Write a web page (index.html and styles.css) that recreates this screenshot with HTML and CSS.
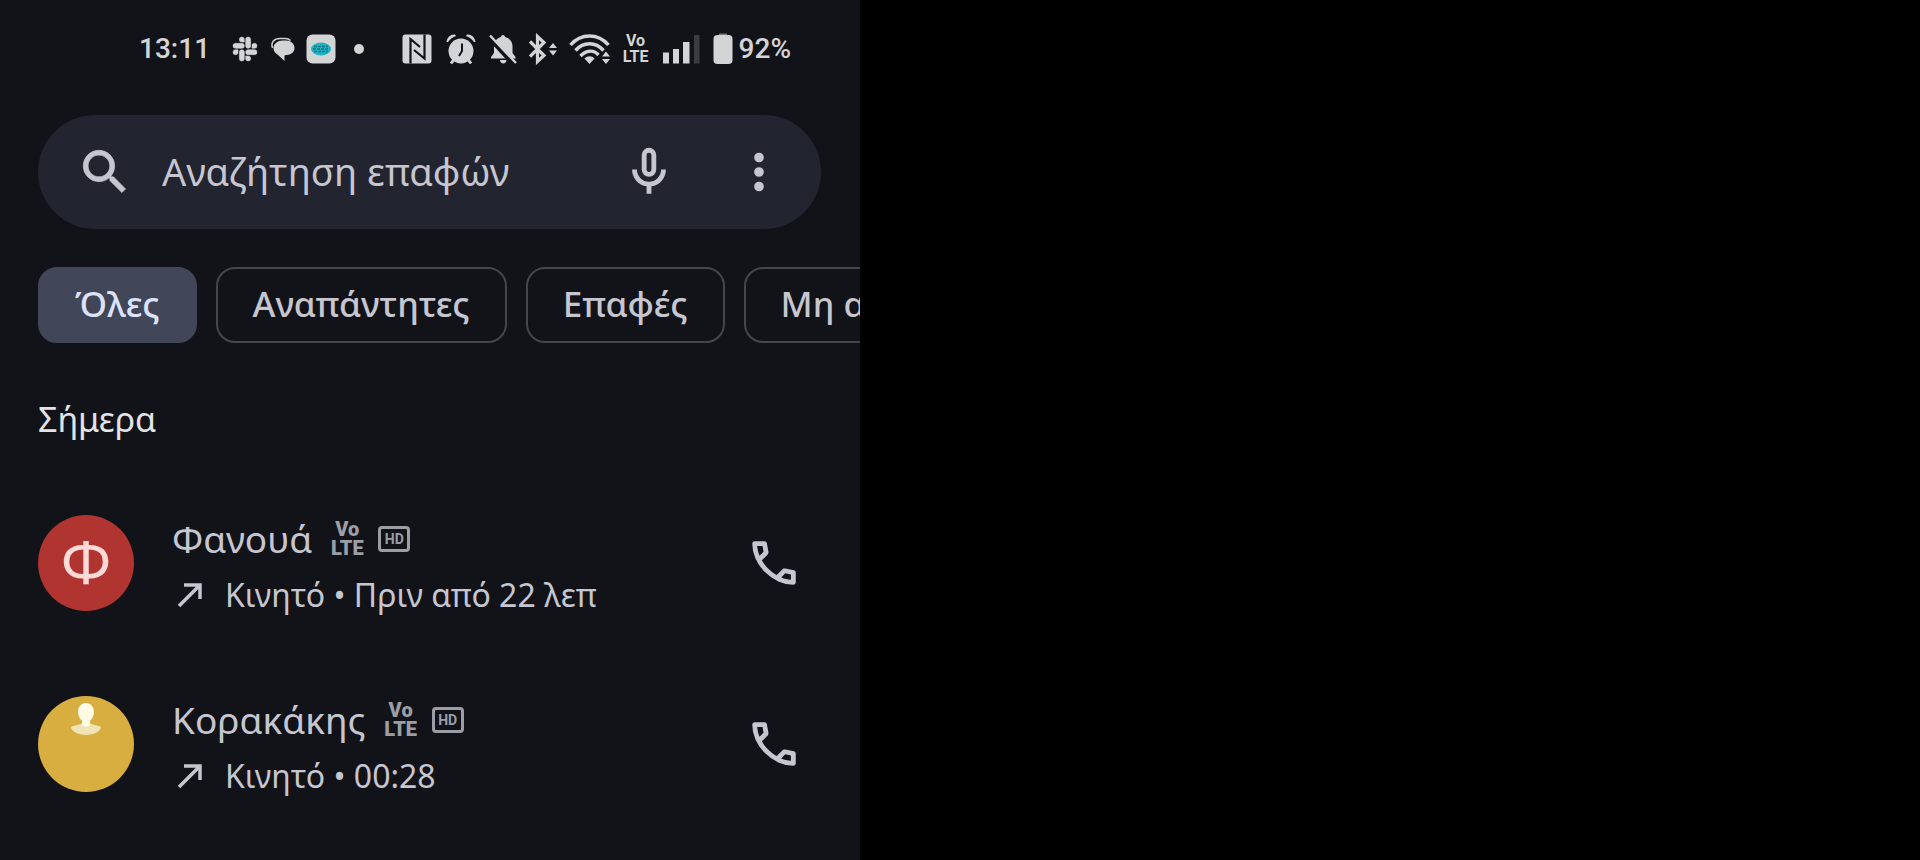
FILE: index.html
```
<!DOCTYPE html>
<html lang="el">
<head>
    <meta charset="UTF-8">
    <meta name="viewport" content="width=device-width, initial-scale=1.0">
    <title>Τηλέφωνο</title>
    <link rel="stylesheet" href="styles.css">
</head>
<body>
<svg class="defs" aria-hidden="true">
    <symbol id="icon-call" viewBox="0 -960 960 960">
        <path d="M798-120q-125 0-247-54.5T329-329Q229-429 174.5-551T120-798q0-18 12-30t30-12h162q14 0 25 9.5t13 22.5l26 140q2 16-1 27t-11 19l-97 98q20 37 47.5 71.5T387-386q31 31 65 57.5t72 48.5l94-94q9-9 23.5-13.5T670-390l138 28q14 4 23 14.5t9 23.5v162q0 18-12 30t-30 12ZM241-600l66-66-17-94h-89q5 41 14 81t26 79Zm358 358q39 17 79.5 27t81.5 13v-88l-94-19-67 67Z"/>
    </symbol>
    <symbol id="icon-outgoing" viewBox="0 0 26 26">
        <path d="M2 24 22.500 3.500M7 3H23V17" fill="none" stroke="currentColor" stroke-width="3.500"/>
    </symbol>
</svg>

<div class="phone">
    <div class="status-bar">
        <div class="status-left">
            <span class="clock">13:11</span>
            <!-- slack -->
            <svg width="30" height="30" viewBox="-3 -3 30 30">
                <path d="M5.042 15.165a2.528 2.528 0 0 1-2.52 2.523A2.528 2.528 0 0 1 0 15.165a2.527 2.527 0 0 1 2.522-2.52h2.52v2.52zM6.313 15.165a2.527 2.527 0 0 1 2.521-2.52 2.527 2.527 0 0 1 2.521 2.52v6.313A2.528 2.528 0 0 1 8.834 24a2.528 2.528 0 0 1-2.521-2.522v-6.313zM8.834 5.042a2.528 2.528 0 0 1-2.521-2.52A2.528 2.528 0 0 1 8.834 0a2.528 2.528 0 0 1 2.521 2.522v2.52H8.834zM8.834 6.313a2.528 2.528 0 0 1 2.521 2.521 2.528 2.528 0 0 1-2.521 2.521H2.522A2.528 2.528 0 0 1 0 8.834a2.528 2.528 0 0 1 2.522-2.521h6.312zM18.956 8.834a2.528 2.528 0 0 1 2.522-2.521A2.528 2.528 0 0 1 24 8.834a2.528 2.528 0 0 1-2.522 2.521h-2.522V8.834zM17.688 8.834a2.528 2.528 0 0 1-2.523 2.521 2.527 2.527 0 0 1-2.520-2.521V2.522A2.527 2.527 0 0 1 15.165 0a2.528 2.528 0 0 1 2.523 2.522v6.312zM15.165 18.956a2.528 2.528 0 0 1 2.523 2.522A2.528 2.528 0 0 1 15.165 24a2.527 2.527 0 0 1-2.520-2.522v-2.522h2.520zM15.165 17.688a2.527 2.527 0 0 1-2.520-2.523 2.526 2.526 0 0 1 2.520-2.520h6.313A2.527 2.527 0 0 1 24 15.165a2.528 2.528 0 0 1-2.522 2.523h-6.313z" stroke="currentColor" stroke-width="0.500"/>
            </svg>
            <!-- messages -->
            <svg width="30" height="30" viewBox="0 0 30 30">
                <path d="M4.500 14C2.500 8 6.500 4.500 12 4.500h5c2.500 0 4.500 1 5.500 2" fill="none" stroke="currentColor" stroke-width="1.500"/>
                <path d="M15 6.500h3c5 0 8.500 3.200 8.500 7.500 0 4-3.500 7-8 7l-2 .5v5.500l-7-6.500C7 19 5.500 17 5.500 14c0-4.300 4-7.500 9.500-7.500z"/>
            </svg>
            <!-- app -->
            <svg width="30" height="30" viewBox="0 0 30 30">
                <rect x="0.500" y="0.500" width="29" height="29" rx="6"/>
                <ellipse cx="15" cy="15" rx="10" ry="6.500" fill="#1fb3c0"/>
                <path d="M7 15h16M8 12.500h14M8 17.500h14" stroke="#127a8a" stroke-width="1.500" stroke-dasharray="3 1"/>
            </svg>
            <svg width="30" height="30" viewBox="0 0 30 30">
                <circle cx="15" cy="15" r="5"/>
            </svg>
        </div>
        <div class="status-right">
            <!-- nfc -->
            <svg width="32" height="32" viewBox="0 0 32 32">
                <rect x="1.500" y="1.500" width="29" height="29" rx="3"/>
                <path d="M9.500 30.500V6l9.500 8M23.500 1.500V25.500L13 17" fill="none" stroke="#121318" stroke-width="2.200"/>
            </svg>
            <!-- alarm -->
            <svg width="32" height="32" viewBox="0 0 32 32">
                <circle cx="16" cy="18" r="12.500"/>
                <path d="M8.500 27 6 30.500M23.500 27l2.500 3.500" stroke="currentColor" stroke-width="3"/>
                <path d="M1.500 9C2 4 6 1 10 1.500l1 1.500C8 4 5 6 3 9zM30.500 9C30 4 26 1 22 1.500l-1 1.500c3 1 6 3 8 6z"/>
                <path d="M17 10.500V18l-3 5" fill="none" stroke="#121318" stroke-width="2"/>
            </svg>
            <!-- muted bell -->
            <svg width="28" height="32" viewBox="0 0 28 32">
                <path d="M14 2c1.200 0 2 .8 2 2 4.500 1 7.500 4.500 7.500 9v7l3 4v1.500H2V24l3-4v-7c0-4.500 3-8 7-9 0-1.200.8-2 2-2zM11 27h6.500c0 2-1.500 3.500-3.200 3.500S11 29 11 27z"/>
                <path d="M-1 3 25 31.500" stroke="#121318" stroke-width="5"/>
                <path d="M1 2.500 27 30" stroke="currentColor" stroke-width="2.400"/>
            </svg>
            <!-- bluetooth -->
            <svg width="28" height="32" viewBox="0 0 28 32">
                <path d="M1 8.500 15 22.500 8.500 28.500V3.500L15 9.500 1 23.500" fill="none" stroke="currentColor" stroke-width="3.200"/>
                <path d="M20 15l4-5 4 5zM20 17.500l4 5 4-5z"/>
            </svg>
            <!-- wifi -->
            <svg width="42" height="32" viewBox="0 0 42 32">
                <path d="M1.500 12C12 0 29 0 39.500 12M6.500 17.500c8-9 20-9 28 0M11.500 23c5.500-6 13-6.500 18 -1" fill="none" stroke="currentColor" stroke-width="3.400"/>
                <path d="M20.500 31l-5-5.500c3-3 7-3 10 0z"/>
                <path d="M33 23.500l4-5 4 5zM33 26l4 5 4-5z"/>
            </svg>
            <span class="volte-status">Vo<br>LTE</span>
            <!-- signal -->
            <svg width="40" height="32" viewBox="0 0 40 32">
                <path d="M2 19.500h6V30.500H2zM12 16h6V30.500h-6zM22 9h6.500V30.500H22z"/>
                <path d="M33 2h5.500V30.500H33z" fill="#3b3c40"/>
            </svg>
            <!-- battery -->
            <svg width="20" height="32" viewBox="0 0 20 32">
                <path d="M6 0.500h8v3H6z" fill="#77787b"/>
                <rect x="0.500" y="2" width="19" height="29" rx="4"/>
            </svg>
            <span class="battery">92%</span>
        </div>
    </div>

    <form class="search" role="search">
        <svg width="58" height="58" viewBox="0 0 24 24">
            <path d="M15.500 14h-.79l-.28-.27A6.471 6.471 0 0 0 16 9.500 6.500 6.500 0 1 0 9.500 16c1.610 0 3.090-.59 4.230-1.570l.27.28v.79l5 4.990L20.490 19l-4.990-5zm-6 0C7.010 14 5 11.990 5 9.500S7.010 5 9.500 5 14 7.010 14 9.500 11.990 14 9.500 14z" stroke="currentColor" stroke-width="0.300"/>
        </svg>
        <input type="text" placeholder="Αναζήτηση επαφών" aria-label="Αναζήτηση επαφών">
        <button type="button" class="icon-btn" aria-label="Φωνητική αναζήτηση">
            <svg width="58" height="58" viewBox="0 -960 960 960">
                <path d="M480-400q-50 0-85-35t-35-85v-240q0-50 35-85t85-35q50 0 85 35t35 85v240q0 50-35 85t-85 35Zm-40 280v-123q-104-14-172-93t-68-184h80q0 83 58.500 141.500T480-320q83 0 141.500-58.500T680-520h80q0 105-68 184t-172 93v123h-80Zm40-360q17 0 28.500-11.500T520-520v-240q0-17-11.500-28.500T480-800q-17 0-28.500 11.500T440-760v240q0 17 11.500 28.500T480-480Z"/>
            </svg>
        </button>
        <button type="button" class="icon-btn" aria-label="Περισσότερα">
            <svg width="58" height="58" viewBox="0 0 24 24">
                <path d="M12 8a2 2 0 1 0 0-4 2 2 0 0 0 0 4zm0 2a2 2 0 1 0 0 4 2 2 0 0 0 0-4zm0 6a2 2 0 1 0 0 4 2 2 0 0 0 0-4z"/>
            </svg>
        </button>
    </form>

    <div class="chips">
        <button type="button" class="chip active">Όλες</button>
        <button type="button" class="chip">Αναπάντητες</button>
        <button type="button" class="chip">Επαφές</button>
        <button type="button" class="chip">Μη ανεπιθύμητες</button>
    </div>

    <h2>Σήμερα</h2>

    <ul class="calls">
        <li class="call">
            <div class="avatar avatar-letter">Φ</div>
            <div class="info">
                <div class="name">Φανουά <span class="volte">Vo<br>LTE</span><span class="hd">HD</span></div>
                <div class="detail"><svg width="26" height="26"><use href="#icon-outgoing"/></svg>Κινητό • Πριν από 22 λεπ</div>
            </div>
            <button type="button" class="icon-btn" aria-label="Κλήση Φανουά">
                <svg width="58" height="58"><use href="#icon-call"/></svg>
            </button>
        </li>
        <li class="call">
            <div class="avatar avatar-photo">
                <svg width="96" height="96" viewBox="0 0 96 96">
                    <path d="M33 31c4-2 9-2 11-4h8c2 2 7 2 11 4 0 4-7 8-15 8s-15-4-15-8z" fill="#f0e3b4"/>
                    <path d="M48 7c5 0 8 4 8 9 0 4-2 7-4 9v4c-2 2-6 2-8 0v-4c-2-2-4-5-4-9 0-5 3-9 8-9z" fill="#fffbe6"/>
                </svg>
            </div>
            <div class="info">
                <div class="name">Κορακάκης <span class="volte">Vo<br>LTE</span><span class="hd">HD</span></div>
                <div class="detail"><svg width="26" height="26"><use href="#icon-outgoing"/></svg>Κινητό • 00:28</div>
            </div>
            <button type="button" class="icon-btn" aria-label="Κλήση Κορακάκης">
                <svg width="58" height="58"><use href="#icon-call"/></svg>
            </button>
        </li>
    </ul>
</div>
</body>
</html>
```
FILE: styles.css
```
:root {
    --bg: #121318;
    --surface: #22242f;
    --chip-active: #414659;
    --outline: #45464b;
    --text: #c6c6d0;
    --status: #d3d4d5;
    --badge: #9c9ea5;
}
* {
    box-sizing: border-box;
}
body {
    margin: 0;
    background-color: #000;
    color: var(--text);
    font-family: 'Noto Sans', sans-serif;
}
svg {
    display: block;
    flex-shrink: 0;
    fill: currentColor;
}
button {
    font-family: inherit;
    cursor: pointer;
}
.defs {
    position: absolute;
    width: 0;
    height: 0;
}
.phone {
    max-width: 860px;
    min-height: 100vh;
    background-color: var(--bg);
    overflow: hidden;
}

/* status bar */
.status-bar {
    display: flex;
    justify-content: space-between;
    padding: 33px 69px 34px 139px;
    color: var(--status);
    font-family: Roboto, sans-serif;
    font-size: 28px;
    font-weight: 500;
    line-height: 32px;
}
.status-left, .status-right {
    display: flex;
    align-items: center;
}
.status-left {
    gap: 8px;
}
.status-right {
    gap: 12px;
}
.clock {
    margin-right: 12px;
}
.volte-status {
    width: 26px;
    font-size: 16px;
    font-weight: 700;
    line-height: 16px;
    text-align: center;
}
.battery {
    margin-left: -6px;
}

/* search */
.search {
    display: flex;
    align-items: center;
    height: 114px;
    margin: 16px 39px 0 38px;
    padding: 0 33px 0 38px;
    border-radius: 57px;
    background-color: var(--surface);
}
.search input {
    flex: 1;
    min-width: 0;
    margin: 0 28px;
    padding: 0 0 3px;
    border: none;
    outline: none;
    background: none;
    color: var(--text);
    font-family: inherit;
    font-size: 38px;
}
.search input::placeholder {
    color: var(--text);
    opacity: 1;
}
.icon-btn {
    padding: 0;
    border: none;
    background: none;
    color: var(--text);
}
.search .icon-btn + .icon-btn {
    margin-left: 52px;
}

/* filters */
.chips {
    display: flex;
    gap: 19px;
    margin-top: 38px;
    padding-left: 38px;
}
.chip {
    flex-shrink: 0;
    height: 76px;
    padding: 0 35px 3px;
    border: 2px solid var(--outline);
    border-radius: 19px;
    background: none;
    color: var(--text);
    font-size: 35px;
    font-weight: 500;
}
.chip.active {
    border-color: var(--chip-active);
    background-color: var(--chip-active);
    color: #dde1f9;
}

/* call list */
h2 {
    margin: 52px 38px 29px;
    color: #e3e2e6;
    font-size: 34px;
    font-weight: 400;
    line-height: 48px;
}
.calls {
    margin: 0;
    padding: 0;
    list-style: none;
}
.call {
    display: flex;
    align-items: center;
    min-height: 181px;
    padding: 0 57px 0 38px;
}
.avatar {
    flex-shrink: 0;
    width: 96px;
    height: 96px;
    border-radius: 50%;
    overflow: hidden;
}
.avatar-letter {
    background-color: #b03530;
    color: #ffdad6;
    font-size: 60px;
    line-height: 92px;
    text-align: center;
}
.avatar-photo {
    background-color: #d8ae41;
}
.info {
    flex: 1;
    min-width: 0;
    padding: 8px 0 0 38px;
    line-height: 56px;
}
.name, .detail {
    display: flex;
    align-items: center;
}
.name {
    font-size: 37px;
}
.detail {
    gap: 22px;
    padding-left: 5px;
    font-size: 32px;
}
.volte {
    width: 36px;
    margin: 0 13px 0 17px;
    color: var(--badge);
    font-family: Roboto, sans-serif;
    font-size: 20px;
    font-weight: 900;
    line-height: 19px;
    text-align: center;
}
.hd {
    width: 32px;
    border: 3px solid var(--badge);
    border-radius: 4px;
    color: var(--badge);
    font-family: Roboto, sans-serif;
    font-size: 14px;
    font-weight: 700;
    line-height: 20px;
    text-align: center;
}
```
